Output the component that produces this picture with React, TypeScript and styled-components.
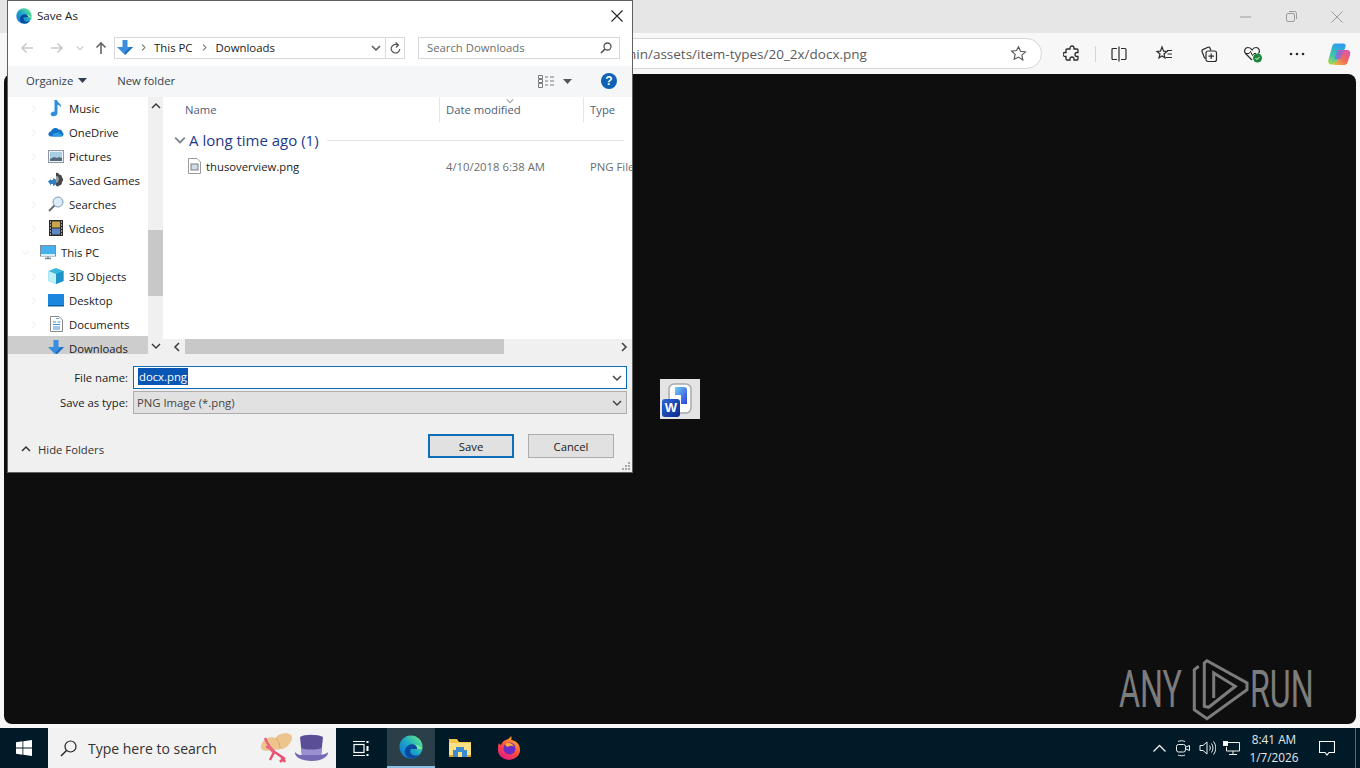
import React from 'react';
import styled, { createGlobalStyle } from 'styled-components';

const UI_FONT = '"Open Sans", "Noto Sans", "Liberation Sans", sans-serif';

const GlobalStyle = createGlobalStyle`
  html, body {
    margin: 0;
    padding: 0;
    background: #011a27;
  }
  * {
    box-sizing: border-box;
  }
`;

const Desktop = styled.div`
  position: relative;
  display: flex;
  flex-direction: column;
  width: 1360px;
  height: 768px;
  overflow: hidden;
  font-family: ${UI_FONT};
  font-size: 11.3px;
  color: #1a1a1a;
`;

/* browser window */
const Browser = styled.div`
  flex: 1;
  display: flex;
  flex-direction: column;
  background: #f7f7f7;
`;

const BrowserTitle = styled.div`
  height: 33px;
  background: #e6e6e6;
  display: flex;
  justify-content: flex-end;
  align-items: center;
`;

const WinButton = styled.div`
  width: 46px;
  height: 33px;
  display: flex;
  align-items: center;
  justify-content: center;
  color: #9b9b9b;
`;

const BrowserToolbar = styled.div`
  height: 41px;
  display: flex;
  align-items: center;
  padding-left: 560px;
`;

const AddressPill = styled.div`
  width: 482px;
  height: 31px;
  background: #fff;
  border: 1px solid #d6d6d6;
  border-radius: 0 16px 16px 0;
  display: flex;
  align-items: center;
  justify-content: space-between;
  padding: 0 14px 0 47px;
  color: #5c5c5c;
`;

const UrlText = styled.span`
  font-size: 13.5px;
  white-space: nowrap;
`;

const ToolIcons = styled.div`
  display: flex;
  align-items: center;
  margin-left: 6px;
`;

const ToolIcon = styled.div<{ $w: number }>`
  width: ${p => p.$w}px;
  height: 30px;
  display: flex;
  align-items: center;
  justify-content: center;
  color: #2b2b2b;
`;

const ToolDivider = styled.div`
  width: 1px;
  height: 16px;
  background: #d4d4d4;
`;

const Viewport = styled.div`
  position: relative;
  flex: 1;
  margin: 0 4px 4px;
  background: #0e0e0e;
  border-radius: 8px;
  display: flex;
  align-items: center;
  justify-content: center;
`;

const Thumb = styled.div`
  position: relative;
  width: 40px;
  height: 40px;
  background: #e4e4e4;
`;

const ThumbBadge = styled.div`
  position: absolute;
  left: 2px;
  bottom: 2px;
  width: 18px;
  height: 18px;
  background: linear-gradient(135deg, #2b66d8, #0d2a8c);
  border-radius: 3px;
  color: #fff;
  font: 700 13px/18px "Liberation Sans", sans-serif;
  text-align: center;
`;

const Watermark = styled.div`
  position: absolute;
  left: 1115px;
  top: 584px;
  display: flex;
  align-items: center;
  color: #7c7c7c;
`;

const WatermarkText = styled.span<{ $w: number }>`
  display: inline-block;
  width: ${p => p.$w}px;
  font: 400 52px/60px Roboto, sans-serif;
  transform: scaleX(0.62);
  transform-origin: left center;
  white-space: nowrap;
`;

/* save dialog */
const Dialog = styled.div`
  position: absolute;
  left: 7px;
  top: 0;
  width: 626px;
  height: 473px;
  border: 1px solid #606060;
  background: #fff;
  display: flex;
  flex-direction: column;
`;

const DialogTitle = styled.div`
  height: 30px;
  display: flex;
  align-items: center;
  padding-left: 8px;
  gap: 5px;
  font-size: 11.6px;
`;

const DialogTitleText = styled.span`
  margin-top: -2px;
`;

const DialogClose = styled.div`
  margin-left: auto;
  width: 30px;
  display: flex;
  justify-content: center;
`;

const NavRow = styled.div`
  height: 35px;
  display: flex;
  align-items: center;
  padding-bottom: 2px;
`;

const NavArrow = styled.div<{ $w: number; $enabled?: boolean }>`
  width: ${p => p.$w}px;
  display: flex;
  justify-content: center;
  color: ${p => (p.$enabled ? '#666' : '#c9c9c9')};
`;

const BreadcrumbBox = styled.div`
  width: 291px;
  height: 22px;
  margin-left: 4px;
  border: 1px solid #d9d9d9;
  display: flex;
  align-items: center;
  padding-left: 2px;
`;

const Crumb = styled.span`
  font-size: 11.4px;
`;

const CrumbSep = styled.span<{ $w: number }>`
  width: ${p => p.$w}px;
  display: flex;
  justify-content: center;
  color: #707070;
`;

const BoxEnd = styled.div`
  margin-left: auto;
  display: flex;
  align-items: center;
  height: 100%;
`;

const BoxButton = styled.div<{ $divided?: boolean }>`
  width: 19px;
  height: 100%;
  display: flex;
  align-items: center;
  justify-content: center;
  color: #555;
  border-left: ${p => (p.$divided ? '1px solid #d9d9d9' : 'none')};
`;

const SearchField = styled.div`
  width: 202px;
  height: 22px;
  margin-left: 13px;
  border: 1px solid #d9d9d9;
  display: flex;
  align-items: center;
  justify-content: space-between;
  padding: 0 7px 0 8px;
  color: #6d6d6d;
`;

const CommandBar = styled.div`
  height: 31px;
  background: #f5f6f7;
  display: flex;
  align-items: center;
  padding: 0 0 1px 18px;
  color: #333f50;
`;

const Command = styled.div`
  display: flex;
  align-items: center;
  gap: 5px;
  margin-top: -2px;
`;

const NewFolder = styled(Command)`
  margin-left: 30px;
`;

const ViewSwitch = styled(Command)`
  margin-left: auto;
  margin-top: 0;
  gap: 9px;
  color: #555;
`;

const HelpBadge = styled.div`
  width: 16px;
  height: 16px;
  margin: 0 15px 0 29px;
  border-radius: 50%;
  background: #0f62b4;
  color: #fff;
  font: 700 12px/16px "Liberation Sans", sans-serif;
  text-align: center;
`;

const Body = styled.div`
  height: 257px;
  display: flex;
`;

const NavPane = styled.div`
  width: 140px;
  overflow: hidden;
`;

const NavList = styled.div`
  margin-top: -1px;
`;

const NavItem = styled.div<{ $level: number; $selected?: boolean }>`
  height: 24px;
  display: flex;
  align-items: center;
  gap: 5px;
  padding-left: ${p => (p.$level === 1 ? 13 : 21)}px;
  background: ${p => (p.$selected ? '#cdcdcd' : 'transparent')};
  white-space: nowrap;
`;

const NavTwist = styled.span<{ $hidden?: boolean }>`
  width: 14px;
  flex: none;
  display: flex;
  color: ${p => (p.$hidden ? 'transparent' : '#f3f3f3')};
`;

const VScroll = styled.div`
  width: 15px;
  background: #f0f0f0;
  display: flex;
  flex-direction: column;
  align-items: center;
  color: #3d3d3d;
`;

const ScrollEnd = styled.div`
  height: 17px;
  width: 15px;
  display: flex;
  align-items: center;
  justify-content: center;
`;

const VTrack = styled.div`
  flex: 1;
  width: 15px;
  padding-top: 116px;
`;

const VThumb = styled.div`
  height: 66px;
  background: #c8c8c8;
`;

const FilePane = styled.div`
  flex: 1;
  min-width: 0;
  display: flex;
  flex-direction: column;
  overflow: hidden;
`;

const ColumnHeader = styled.div`
  height: 25px;
  display: flex;
  color: #4c607a;
`;

const Column = styled.div<{ $w: number }>`
  position: relative;
  width: ${p => p.$w}px;
  flex: none;
  padding: 5px 0 0 6px;
  border-left: 1px solid #e5e5e5;
  white-space: nowrap;
`;

const NameColumn = styled(Column)`
  padding-left: 22px;
  border-left: none;
`;

const SortMark = styled.div`
  position: absolute;
  left: 66px;
  top: 0;
  color: #a5a5a5;
  line-height: 0;
`;

const GroupRow = styled.div`
  height: 22px;
  margin-top: 7px;
  display: flex;
  align-items: center;
  padding-left: 11px;
  color: #1e3a8a;
  font-size: 15px;
`;

const GroupChevron = styled.div`
  width: 15px;
  display: flex;
  color: #7c8591;
`;

const GroupRule = styled.div`
  flex: 1;
  height: 1px;
  margin: 0 8px;
  background: #e2e2e2;
`;

const FileRow = styled.div`
  height: 22px;
  margin-top: 4px;
  display: flex;
  align-items: center;
  white-space: nowrap;
`;

const FileNameCell = styled.div`
  width: 283px;
  flex: none;
  display: flex;
  align-items: center;
  gap: 5px;
  padding-left: 25px;
`;

const FileDateCell = styled.div`
  width: 144px;
  flex: none;
  color: #6d6d6d;
`;

const FileTypeCell = styled.div`
  color: #6d6d6d;
`;

const FileSpacer = styled.div`
  flex: 1;
`;

const HScroll = styled.div`
  height: 15px;
  flex: none;
  display: flex;
  background: #f0f0f0;
  color: #3d3d3d;
`;

const HEnd = styled.div`
  width: 22px;
  padding-left: 5px;
  display: flex;
  align-items: center;
  justify-content: center;
`;

const HThumb = styled.div`
  width: 319px;
  background: #c8c8c8;
`;

const HGap = styled.div`
  flex: 1;
`;

const Footer = styled.div`
  flex: 1;
  position: relative;
  background: #f0f0f0;
  padding-top: 12px;
`;

const FormRow = styled.div`
  display: flex;
  align-items: center;
  height: 23px;
  margin-bottom: 2px;
`;

const FormLabel = styled.div`
  width: 120px;
  margin-right: 5px;
  text-align: right;
`;

const Field = styled.div<{ $active?: boolean }>`
  width: 494px;
  height: 23px;
  display: flex;
  align-items: center;
  justify-content: space-between;
  padding: 0 4px 0 3px;
  background: ${p => (p.$active ? '#fff' : '#e1e1e1')};
  border: 1px solid ${p => (p.$active ? '#0e6eb8' : '#adadad')};
  color: #444;
`;

const SelectedText = styled.span`
  background: #0a56b5;
  color: #fff;
  padding: 0 1px;
  margin: -2px 0 0 1px;
  line-height: 17px;
`;

const ActionRow = styled.div`
  display: flex;
  align-items: center;
  margin-top: 20px;
  padding: 0 18px 0 13px;
`;

const HideFolders = styled.div`
  display: flex;
  align-items: center;
  gap: 7px;
  color: #333;
  margin: 6px auto 0 0;
`;

const DialogButton = styled.div<{ $primary?: boolean }>`
  width: 86px;
  height: 24px;
  display: flex;
  align-items: center;
  justify-content: center;
  background: #e1e1e1;
  border: ${p => (p.$primary ? '2px solid #0e6eb8' : '1px solid #adadad')};
  margin-left: ${p => (p.$primary ? 0 : 14)}px;
`;

const Grip = styled.div`
  position: absolute;
  right: 1px;
  bottom: 1px;
  line-height: 0;
`;

/* taskbar */
const Taskbar = styled.div`
  height: 40px;
  background: #011a27;
  display: flex;
  align-items: stretch;
  color: #fff;
`;

const StartButton = styled.div`
  width: 48px;
  display: flex;
  align-items: center;
  justify-content: center;
`;

const SearchBox = styled.div`
  width: 288px;
  background: #f2f2f2;
  display: flex;
  align-items: center;
  padding-left: 12px;
  color: #333;
`;

const SearchLabel = styled.span`
  font-size: 14px;
  margin-left: 11px;
  width: 172px;
  white-space: nowrap;
`;

const TaskCell = styled.div<{ $active?: boolean; $gap: number }>`
  width: 48px;
  margin-right: ${p => p.$gap}px;
  display: flex;
  align-items: center;
  justify-content: center;
  background: ${p => (p.$active ? '#2b3f4b' : 'transparent')};
  border-bottom: ${p => (p.$active ? '2px solid #8cbfe2' : 'none')};
`;

const Tray = styled.div`
  margin-left: auto;
  display: flex;
  align-items: center;
`;

const TrayCell = styled.div`
  width: 24px;
  display: flex;
  justify-content: center;
  color: #f0f0f0;
`;

const Clock = styled.div`
  width: 58px;
  margin-left: 2px;
  text-align: center;
  font-size: 11.8px;
  line-height: 18px;
  color: #e4e8ea;
`;

const Notify = styled.div`
  width: 47px;
  display: flex;
  justify-content: center;
  margin-right: 5px;
`;

const ShowDesktop = styled.div`
  width: 5px;
  height: 100%;
  border-left: 1px solid #5a6a74;
`;

/* drawings */
const Chevron = ({ dir, size = 10 }: { dir: 'up' | 'down' | 'left' | 'right'; size?: number }) => {
  const points = {
    up: '1,7 5,3 9,7',
    down: '1,3 5,7 9,3',
    left: '7,1 3,5 7,9',
    right: '3,1 7,5 3,9',
  }[dir];
  return (
    <svg width={size} height={size} viewBox="0 0 10 10" fill="none">
      <polyline points={points} stroke="currentColor" strokeWidth="1.5" />
    </svg>
  );
};

const Caret = () => (
  <svg width="9" height="5" viewBox="0 0 9 5">
    <path d="M0 0h9L4.5 5z" fill="currentColor" />
  </svg>
);

const Arrow = ({ d }: { d: string }) => (
  <svg width="14" height="14" viewBox="0 0 14 14" fill="none">
    <path d={d} stroke="currentColor" strokeWidth="1.6" />
  </svg>
);

const DownloadArrow = () => (
  <svg width="16" height="16" viewBox="0 0 16 16">
    <path d="M5.5 0h5v7H16l-8 8-8-8h5.5z" fill="#3a8ee0" />
    <path d="M8 15l8-8h-3l-5 5z" fill="#1f6fc0" />
  </svg>
);

const EdgeLogo = ({ size }: { size: number }) => (
  <svg width={size} height={size} viewBox="0 0 24 24">
    <defs>
      <linearGradient id={`edge${size}`} x1="0.1" y1="0.9" x2="0.9" y2="0.1">
        <stop offset="0" stopColor="#0f78d4" />
        <stop offset="0.5" stopColor="#1aa6c8" />
        <stop offset="1" stopColor="#62e58f" />
      </linearGradient>
    </defs>
    <circle cx="12" cy="12" r="11.5" fill={`url(#edge${size})`} />
    <path d="M13 23.4C7 23.6 4.5 18 6.5 13.6 8 10.4 11.8 8.6 15 9.6c2.5.8 3.6 2.8 3 4.4H11.5C10.6 17 12 20.3 15.5 20.5c2 .1 4-.4 5.500-1.500-1.800 2.800-4.800 4.300-8 4.400z" fill="#0a4a9e" />
    <path d="M18 14c.6-1.600-.5-3.600-3-4.400 2-.2 5.500.8 8.400 3.400-.2 .5-.6 1-1 1z" fill="#74ea9c" />
  </svg>
);

const CopilotLogo = () => (
  <svg width="24" height="24" viewBox="0 0 24 24">
    <defs>
      <linearGradient id="copA" x1="0.6" y1="0" x2="0.2" y2="1">
        <stop offset="0" stopColor="#2f9cf0" />
        <stop offset="0.6" stopColor="#3cc6b0" />
        <stop offset="1" stopColor="#a6d94e" />
      </linearGradient>
      <linearGradient id="copB" x1="0" y1="1" x2="1" y2="0">
        <stop offset="0" stopColor="#f6c23d" />
        <stop offset="0.5" stopColor="#ef6a5a" />
        <stop offset="1" stopColor="#d84fc4" />
      </linearGradient>
    </defs>
    <path d="M8 1.500h8c2 0 3 1 2.500 3L14 19c-.5 2-2 3.500-4 3.500H5c-3 0-4.500-2-3.500-5L5 5c.5-2 1.500-3.500 3-3.500z" fill="url(#copA)" />
    <path d="M11 8h8.500c3 0 4.500 2 3.500 5l-2.500 7.500c-.7 2-2 2.500-4 2.500H9c-2 0-3-1-3-2 2 .5 3.500 0 4-2z" fill="url(#copB)" />
    <path d="M10 8.500h6.500l-3 8.500H7.500z" fill="#7c6ce8" opacity="0.75" />
  </svg>
);

const navIcons: Record<string, React.ReactNode> = {
  Music: (
    <svg width="16" height="18" viewBox="0 0 16 18">
      <path d="M6.500 1h2.500c.4 3 4.700 3 3.800 7.500-.8-1.800-2-2.500-3.300-2.800V14c0 2-2 3.500-4.500 3.200-2.500-.3-3-2.800-1.200-4 1-.7 2-.8 2.700-.5z" fill="#2f8fdc" />
    </svg>
  ),
  OneDrive: (
    <svg width="16" height="12" viewBox="0 0 16 12">
      <path d="M3 10.500C1 10.500 0 9 .5 7.500 1 6 2.300 5.500 3 5.600 4 2 8 1 10.500 3.500 13 3 14.500 5 14.500 6.500 16 7 16 10.500 13.500 10.500z" fill="#1273c6" />
      <path d="M5 10.500c-1-2 1-4 3-3.300 1-1.200 4-1 4.500.8 1.500 0 2.500 1 1.500 2.500z" fill="#2d9be6" />
    </svg>
  ),
  Pictures: (
    <svg width="16" height="13" viewBox="0 0 16 13">
      <rect x=".5" y=".5" width="15" height="12" fill="#eef3f7" stroke="#8d99a5" />
      <rect x="2" y="2" width="12" height="9" fill="#a9cde4" />
      <path d="M2 9l4-2 3 1 2-1 3 1v3H2z" fill="#54697a" />
    </svg>
  ),
  'Saved Games': (
    <svg width="16" height="16" viewBox="0 0 16 16">
      <path d="M8 1c2-1 3 .5 3 1.500 2 0 3 1 3 3 1.500 1 1.500 3.500 0 4.500 0 2-1 3.500-3 3.500-1 1.500-3 1-3-.5z" fill="#45474b" />
      <path d="M8 4c1.500-.5 3 1 3 3l-1 3-2 1z" fill="#9a9da1" />
      <path d="M0 9.500L3 7v1h2V6l3 1.500v5L5 14v-2H3v1.500z" fill="#2f7fc8" />
    </svg>
  ),
  Searches: (
    <svg width="16" height="16" viewBox="0 0 16 16" fill="none">
      <circle cx="10" cy="6" r="5" fill="#dcecf7" stroke="#7d9db5" />
      <path d="M6.500 9.500L1 15" stroke="#5f6b75" strokeWidth="1.800" />
    </svg>
  ),
  Videos: (
    <svg width="14" height="16" viewBox="0 0 14 16">
      <rect width="14" height="16" fill="#2c2c2c" />
      <rect x="3" y="1.500" width="8" height="6" fill="#c9a64a" />
      <rect x="3" y="8.500" width="8" height="6" fill="#5b87c7" />
      <path d="M1 2h1M1 5h1M1 8h1M1 11h1M1 14h1M12 2h1M12 5h1M12 8h1M12 11h1M12 14h1" stroke="#fff" strokeWidth="1.200" />
    </svg>
  ),
  'This PC': (
    <svg width="16" height="15" viewBox="0 0 16 15">
      <rect x=".5" y=".5" width="15" height="10.500" fill="#46b1ee" stroke="#7c8d99" />
      <rect x="1" y="9" width="14" height="2" fill="#d9eefb" />
      <path d="M5 13.500h6" stroke="#6e7f8b" strokeWidth="1.400" />
      <path d="M7 11h2v2H7z" fill="#9aa7b1" />
    </svg>
  ),
  '3D Objects': (
    <svg width="16" height="16" viewBox="0 0 16 16">
      <path d="M8 0l7.500 3v10L8 16 .5 13V3z" fill="#37b7dc" />
      <path d="M.5 3L8 6v10L.5 13z" fill="#bff0f6" />
      <path d="M15.500 3L8 6v10l7.500-3z" fill="#1d93c9" />
    </svg>
  ),
  Desktop: (
    <svg width="16" height="13" viewBox="0 0 16 13">
      <rect width="16" height="11" fill="#1a86de" />
      <rect y="11" width="16" height="1.500" fill="#0d5ea8" />
    </svg>
  ),
  Documents: (
    <svg width="13" height="16" viewBox="0 0 13 16">
      <path d="M.5.500H9L12.500 4v11.500H.5z" fill="#fff" stroke="#8a8a8a" />
      <path d="M3 6h3M3 8.500h7M3 11h7M7.500 6h3M3 13h7" stroke="#3f8fd2" />
      <path d="M6 2.500h3" stroke="#5ea6de" />
    </svg>
  ),
  Downloads: <DownloadArrow />,
};

const navItems = [
  { label: 'Music', level: 2 },
  { label: 'OneDrive', level: 2 },
  { label: 'Pictures', level: 2 },
  { label: 'Saved Games', level: 2 },
  { label: 'Searches', level: 2 },
  { label: 'Videos', level: 2 },
  { label: 'This PC', level: 1, open: true },
  { label: '3D Objects', level: 2 },
  { label: 'Desktop', level: 2 },
  { label: 'Documents', level: 2 },
  { label: 'Downloads', level: 2, selected: true },
];

const IconBox = styled.span`
  width: 16px;
  height: 16px;
  flex: none;
  display: flex;
  align-items: center;
  justify-content: center;
`;

const SaveDialog = () => (
  <Dialog>
    <DialogTitle>
      <EdgeLogo size={16} />
      <DialogTitleText>Save As</DialogTitleText>
      <DialogClose>
        <svg width="12" height="12" viewBox="0 0 12 12">
          <path d="M.5.500l11 11M11.500.500l-11 11" stroke="#222" strokeWidth="1.100" />
        </svg>
      </DialogClose>
    </DialogTitle>
    <NavRow>
      <NavArrow $w={38}>
        <Arrow d="M13 7H2M6.500 2.500L2 7l4.500 4.500" />
      </NavArrow>
      <NavArrow $w={22}>
        <Arrow d="M1 7h11M7.500 2.500L12 7l-4.500 4.500" />
      </NavArrow>
      <NavArrow $w={24}>
        <Chevron dir="down" size={8} />
      </NavArrow>
      <NavArrow $w={18} $enabled>
        <Arrow d="M7 13V2M2.500 6.500L7 2l4.500 4.500" />
      </NavArrow>
      <BreadcrumbBox>
        <DownloadArrow />
        <CrumbSep $w={21}>
          <Chevron dir="right" size={7} />
        </CrumbSep>
        <Crumb>This PC</Crumb>
        <CrumbSep $w={23}>
          <Chevron dir="right" size={7} />
        </CrumbSep>
        <Crumb>Downloads</Crumb>
        <BoxEnd>
          <BoxButton>
            <Chevron dir="down" />
          </BoxButton>
          <BoxButton $divided>
            <svg width="11" height="12" viewBox="0 0 11 12" fill="none">
              <path d="M8 3.200A4.300 4.300 0 1 0 9.800 7" stroke="currentColor" strokeWidth="1.200" />
              <path d="M5.500.500L8.500 3 6 5.500" stroke="currentColor" strokeWidth="1.200" />
            </svg>
          </BoxButton>
        </BoxEnd>
      </BreadcrumbBox>
      <SearchField>
        <span>Search Downloads</span>
        <svg width="12" height="12" viewBox="0 0 12 12" fill="none">
          <circle cx="7.500" cy="4.500" r="3.500" stroke="#555" strokeWidth="1.300" />
          <path d="M5 7l-4 4" stroke="#555" strokeWidth="1.700" />
        </svg>
      </SearchField>
    </NavRow>
    <CommandBar>
      <Command>
        Organize
        <Caret />
      </Command>
      <NewFolder>New folder</NewFolder>
      <ViewSwitch>
        <svg width="16" height="13" viewBox="0 0 16 13" fill="none" stroke="#7a7a7a">
          <path d="M.5.500h4v3h-4zM.5 4.500h4v3h-4zM.5 8.500h4v4h-4z" />
          <path d="M7 2h3M12 2h4M7 6h3M12 6h4M7 10h3M12 10h4" />
        </svg>
        <Caret />
      </ViewSwitch>
      <HelpBadge>?</HelpBadge>
    </CommandBar>
    <Body>
      <NavPane>
        <NavList>
          {navItems.map(item => (
            <NavItem key={item.label} $level={item.level} $selected={item.selected}>
              <NavTwist $hidden={item.selected}>
                <Chevron dir={item.open ? 'down' : 'right'} size={9} />
              </NavTwist>
              <IconBox>{navIcons[item.label]}</IconBox>
              {item.label}
            </NavItem>
          ))}
        </NavList>
      </NavPane>
      <VScroll>
        <ScrollEnd>
          <Chevron dir="up" />
        </ScrollEnd>
        <VTrack>
          <VThumb />
        </VTrack>
        <ScrollEnd>
          <Chevron dir="down" />
        </ScrollEnd>
      </VScroll>
      <FilePane>
        <ColumnHeader>
          <NameColumn $w={276}>Name</NameColumn>
          <Column $w={144}>
            <SortMark>
              <Chevron dir="down" size={8} />
            </SortMark>
            Date modified
          </Column>
          <Column $w={60}>Type</Column>
        </ColumnHeader>
        <GroupRow>
          <GroupChevron>
            <Chevron dir="down" size={12} />
          </GroupChevron>
          A long time ago (1)
          <GroupRule />
        </GroupRow>
        <FileRow>
          <FileNameCell>
            <svg width="13" height="16" viewBox="0 0 13 16">
              <path d="M.5.500H9L12.500 4v11.500H.5z" fill="#fff" stroke="#9a9a9a" />
              <rect x="3" y="6" width="7" height="6" fill="#d4dbe2" stroke="#6f7f8e" />
            </svg>
            thusoverview.png
          </FileNameCell>
          <FileDateCell>4/10/2018 6:38 AM</FileDateCell>
          <FileTypeCell>PNG File</FileTypeCell>
        </FileRow>
        <FileSpacer />
        <HScroll>
          <HEnd>
            <Chevron dir="left" />
          </HEnd>
          <HThumb />
          <HGap />
          <HEnd>
            <Chevron dir="right" />
          </HEnd>
        </HScroll>
      </FilePane>
    </Body>
    <Footer>
      <FormRow>
        <FormLabel>File name:</FormLabel>
        <Field $active>
          <SelectedText>docx.png</SelectedText>
          <Chevron dir="down" />
        </Field>
      </FormRow>
      <FormRow>
        <FormLabel>Save as type:</FormLabel>
        <Field>
          PNG Image (*.png)
          <Chevron dir="down" />
        </Field>
      </FormRow>
      <ActionRow>
        <HideFolders>
          <Chevron dir="up" />
          Hide Folders
        </HideFolders>
        <DialogButton $primary>Save</DialogButton>
        <DialogButton>Cancel</DialogButton>
      </ActionRow>
      <Grip>
        <svg width="10" height="10" viewBox="0 0 10 10" fill="#a9a9a9">
          <rect x="7" y="1" width="2" height="2" />
          <rect x="4" y="4" width="2" height="2" />
          <rect x="7" y="4" width="2" height="2" />
          <rect x="1" y="7" width="2" height="2" />
          <rect x="4" y="7" width="2" height="2" />
          <rect x="7" y="7" width="2" height="2" />
        </svg>
      </Grip>
    </Footer>
  </Dialog>
);

const App = () => (
  <Desktop>
    <GlobalStyle />
    <Browser>
      <BrowserTitle>
        <WinButton>
          <svg width="11" height="2" viewBox="0 0 11 2">
            <path d="M0 1h11" stroke="currentColor" />
          </svg>
        </WinButton>
        <WinButton>
          <svg width="11" height="11" viewBox="0 0 11 11" fill="none" stroke="currentColor">
            <rect x=".5" y="2.500" width="8" height="8" rx="1.500" />
            <path d="M3 .500h5.500a2 2 0 0 1 2 2V8" />
          </svg>
        </WinButton>
        <WinButton>
          <svg width="12" height="12" viewBox="0 0 12 12">
            <path d="M.5.500l11 11M11.500.500l-11 11" stroke="currentColor" />
          </svg>
        </WinButton>
      </BrowserTitle>
      <BrowserToolbar>
        <AddressPill>
          <UrlText>admin/assets/item-types/20_2x/docx.png</UrlText>
          <svg width="17" height="17" viewBox="0 0 24 24" fill="none" stroke="#555" strokeWidth="1.600">
            <path d="M12 2.500l2.900 6.300 6.900.8-5.100 4.700 1.400 6.800L12 17l-6.100 3.100 1.400-6.800-5.100-4.700 6.900-.8z" />
          </svg>
        </AddressPill>
        <ToolIcons>
          <ToolIcon $w={47}>
            <svg width="18" height="18" viewBox="0 0 18 18" fill="none" stroke="currentColor" strokeWidth="1.300">
              <path d="M7 3a2 2 0 0 1 4 0v1h3a1 1 0 0 1 1 1v2.500h-1a2 2 0 0 0 0 4h1V14a1 1 0 0 1-1 1h-3v-1a2 2 0 0 0-4 0v1H4a1 1 0 0 1-1-1v-2.500H2a2 2 0 0 1 0-4h1V5a1 1 0 0 1 1-1h3z" />
            </svg>
          </ToolIcon>
          <ToolDivider />
          <ToolIcon $w={46}>
            <svg width="16" height="16" viewBox="0 0 16 16" fill="none" stroke="currentColor" strokeWidth="1.200">
              <path d="M6 2.500H2A1 1 0 0 0 1 3.500v9a1 1 0 0 0 1 1h4M10 2.500h4a1 1 0 0 1 1 1v9a1 1 0 0 1-1 1h-4M8 .5v15" />
            </svg>
          </ToolIcon>
          <ToolIcon $w={44}>
            <svg width="18" height="18" viewBox="0 0 18 18" fill="none" stroke="currentColor" strokeWidth="1.200">
              <path d="M7 2l1.600 4.200 3.400.2-3 2.600 1 3.900L7 10.900l-3 2 1-3.900L2 6.400l3.400-.2zM12 5.500h5M12.500 9h4.500M11 12.500h6" />
            </svg>
          </ToolIcon>
          <ToolIcon $w={46}>
            <svg width="18" height="18" viewBox="0 0 18 18" fill="none" stroke="currentColor" strokeWidth="1.200">
              <path d="M6 13H4.500L2 6.500a1.500 1.500 0 0 1 .8-1.900L8 2.300a1.500 1.500 0 0 1 1.900.7L11 5.500" />
              <rect x="6" y="6" width="10.500" height="10.500" rx="2" />
              <path d="M11.200 8.500v5.500M8.500 11.200H14" />
            </svg>
          </ToolIcon>
          <ToolIcon $w={42}>
            <svg width="20" height="18" viewBox="0 0 20 18" fill="none">
              <path d="M9 15L2.500 8.500C.5 6 2 2.500 5 2.500c2 0 3.200 1 4 2.500.8-1.500 2-2.500 4-2.500 3 0 4.500 3.500 2.500 6" stroke="currentColor" strokeWidth="1.200" />
              <path d="M3 8.500h3l1.500-2 2 4 1.500-2h2" stroke="currentColor" strokeWidth="1" />
              <circle cx="14.500" cy="13" r="4.500" fill="#1a8a3a" />
              <path d="M12.500 13l1.500 1.500 2.500-2.500" stroke="#fff" strokeWidth="1" />
            </svg>
          </ToolIcon>
          <ToolIcon $w={45}>
            <svg width="16" height="4" viewBox="0 0 16 4" fill="currentColor">
              <circle cx="2" cy="2" r="1.300" />
              <circle cx="8" cy="2" r="1.300" />
              <circle cx="14" cy="2" r="1.300" />
            </svg>
          </ToolIcon>
          <ToolIcon $w={40}>
            <CopilotLogo />
          </ToolIcon>
        </ToolIcons>
      </BrowserToolbar>
      <Viewport>
        <Thumb>
          <svg width="40" height="40" viewBox="0 0 40 40">
            <defs>
              <linearGradient id="thumbDoc" x1="0" y1="0" x2="1" y2="1">
                <stop offset="0" stopColor="#6fd0f5" />
                <stop offset="1" stopColor="#2d3fd8" />
              </linearGradient>
            </defs>
            <rect x="9" y="5" width="22" height="29" rx="5" fill="#fdfdfd" stroke="#a8a8a8" strokeWidth="1.500" />
            <path d="M15 8h9a3 3 0 0 1 3 3v14h-6v-9h-6z" fill="url(#thumbDoc)" />
          </svg>
          <ThumbBadge>W</ThumbBadge>
        </Thumb>
        <Watermark>
          <WatermarkText $w={73}>ANY</WatermarkText>
          <svg width="58" height="64" viewBox="0 0 58 64" fill="none" stroke="#7c7c7c" strokeWidth="3">
            <path d="M6.700 8.300L2.300 11.700v40L15 60.700 55 31.700V25L15 2.700 12.300 5v43.300l4.400 1L43.300 28.300 21.700 15v25" />
          </svg>
          <WatermarkText $w={70}>RUN</WatermarkText>
        </Watermark>
      </Viewport>
    </Browser>
    <SaveDialog />
    <Taskbar>
      <StartButton>
        <svg width="16" height="16" viewBox="0 0 16 16" fill="#fff">
          <path d="M0 2.200l6.500-.9v6.300H0zM7.300 1.200L16 0v7.600H7.300zM0 8.400h6.500v6.300L0 13.800zM7.300 8.400H16V16l-8.700-1.200z" />
        </svg>
      </StartButton>
      <SearchBox>
        <svg width="17" height="17" viewBox="0 0 17 17" fill="none" stroke="#222">
          <circle cx="10.500" cy="6.500" r="5.500" strokeWidth="1.200" />
          <path d="M6.500 10.500L1 16" strokeWidth="1.500" />
        </svg>
        <SearchLabel>Type here to search</SearchLabel>
        <svg width="34" height="32" viewBox="0 0 34 32">
          <path d="M1 14C3 6 11 4 16 6 18 1 28 0 31 3c3 3-1 10-6 13-4 2-8 1-12 2-4 1-13 2-12-4z" fill="#ecc48c" />
          <path d="M16 6c2 2 4 6 4 10" stroke="#d9a868" strokeWidth="1" fill="none" />
          <path d="M5 6c2 5 5 10 9 13M6 15c3 0 5 2 7 5" stroke="#e8657d" strokeWidth="2.500" fill="none" />
          <path d="M13 19l12 8M14 20l-4 8M21 24l4 6M24 26l-4 4" stroke="#e8506f" strokeWidth="2.500" fill="none" />
        </svg>
        <svg width="35" height="32" viewBox="0 0 35 32">
          <path d="M6 5c4-3 18-3 23 0l-2 19H8z" fill="#5a4f96" />
          <path d="M7 16c5 2 15 2 21 0l-1 8H8z" fill="#9a90d0" />
          <path d="M1 20c3 4 7 3 9 3h15c3 0 8-1 9-3 1 4-6 9-16 9S0 25 1 20z" fill="#7568b4" />
        </svg>
      </SearchBox>
      <TaskCell $gap={3}>
        <svg width="17" height="15" viewBox="0 0 17 15" fill="none" stroke="#fff" strokeWidth="1.200">
          <path d="M1 0.500h12M1 14.500h12" />
          <rect x="2" y="3.500" width="10" height="8" />
          <path d="M15.500 0v2M15.500 5v5M15.500 13v2" strokeWidth="2" />
        </svg>
      </TaskCell>
      <TaskCell $active $gap={1}>
        <EdgeLogo size={24} />
      </TaskCell>
      <TaskCell $gap={1}>
        <svg width="24" height="20" viewBox="0 0 24 20">
          <path d="M1 1h8l2 3h12v15H1z" fill="#f3c64d" />
          <path d="M1 5h22v14H1z" fill="#fadf85" />
          <path d="M1 17h22v2H1z" fill="#d9a22a" />
          <path d="M8 9h8v3h3v7H5v-7h3z" fill="#3c8bd0" />
          <rect x="10" y="14" width="4" height="5" fill="#fadf85" />
        </svg>
      </TaskCell>
      <TaskCell $gap={0}>
        <svg width="24" height="24" viewBox="0 0 24 24">
          <defs>
            <linearGradient id="foxA" x1="0.2" y1="1" x2="0.8" y2="0">
              <stop offset="0" stopColor="#e31587" />
              <stop offset="0.5" stopColor="#ff4f3a" />
              <stop offset="1" stopColor="#ffc02e" />
            </linearGradient>
          </defs>
          <path d="M2 7c.5 1 1 1.500 2 2C5 6 7 4.500 9 4c2-1 4-2 5-4 1 2 .5 3.500 0 4 5 .5 9 4 9 10a11 10 0 0 1-22 0C1 11 1 9 2 7z" fill="url(#foxA)" />
          <circle cx="12.500" cy="12.500" r="6" fill="#6a2bc9" />
          <path d="M8 8c3-2 8-1 9 3-2-2-5-1-7 0z" fill="#ffb12e" />
        </svg>
      </TaskCell>
      <Tray>
        <TrayCell>
          <svg width="13" height="8" viewBox="0 0 13 8" fill="none" stroke="currentColor" strokeWidth="1.300">
            <path d="M.5 7.500l6-6 6 6" />
          </svg>
        </TrayCell>
        <TrayCell>
          <svg width="16" height="18" viewBox="0 0 16 18" fill="none" stroke="currentColor">
            <rect x="1.500" y="5.500" width="9" height="7.500" rx="2" />
            <path d="M11 8l3.500-1.500v5L11 10M3 2.500c2-1 5-1 7 0M3 16c2 1 5 1 7 0" />
          </svg>
        </TrayCell>
        <TrayCell>
          <svg width="17" height="16" viewBox="0 0 17 16" fill="none" stroke="currentColor">
            <path d="M1 5.500h3L8 2v12l-4-3.500H1zM10.500 5.500c1 1.500 1 3.500 0 5M12.500 3.500c2 3 2 6 0 9M14.500 1.500c3 4 3 9 0 13" />
          </svg>
        </TrayCell>
        <TrayCell>
          <svg width="17" height="15" viewBox="0 0 17 15" fill="none" stroke="currentColor">
            <path d="M5 1.500h11.500v8.500H3.500V6M10 10v3M6 13.500h8" />
            <rect x=".5" y=".5" width="4" height="4" fill="#fff" />
          </svg>
        </TrayCell>
        <Clock>
          8:41 AM
          <br />
          1/7/2026
        </Clock>
        <Notify>
          <svg width="16" height="15" viewBox="0 0 16 15" fill="none" stroke="#fff" strokeWidth="1.100">
            <path d="M.5.500h15v11H10l-2 2.500-2-2.500H.5z" />
          </svg>
        </Notify>
        <ShowDesktop />
      </Tray>
    </Taskbar>
  </Desktop>
);

export default App;
